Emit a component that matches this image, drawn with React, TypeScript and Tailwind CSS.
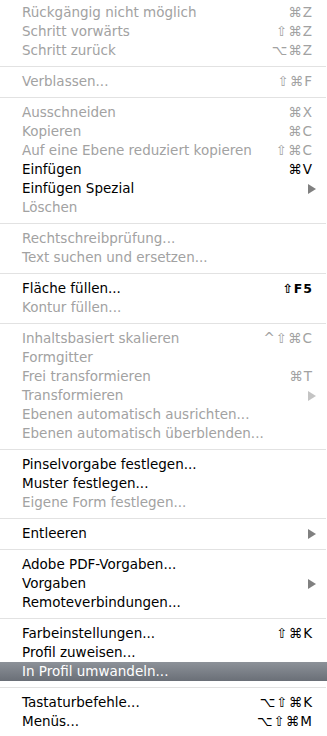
import React from "react";

type Item =
  | { sep: true }
  | {
      sep?: false;
      label: string;
      sc?: string;
      sub?: boolean;
      on?: boolean;
      hl?: boolean;
      boldSc?: boolean;
    };

const items: Item[] = [
  { label: "Rückgängig nicht möglich", sc: "⌘Z" },
  { label: "Schritt vorwärts", sc: "⇧⌘Z" },
  { label: "Schritt zurück", sc: "⌥⌘Z" },
  { sep: true },
  { label: "Verblassen...", sc: "⇧⌘F" },
  { sep: true },
  { label: "Ausschneiden", sc: "⌘X" },
  { label: "Kopieren", sc: "⌘C" },
  { label: "Auf eine Ebene reduziert kopieren", sc: "⇧⌘C" },
  { label: "Einfügen", sc: "⌘V", on: true },
  { label: "Einfügen Spezial", sub: true, on: true },
  { label: "Löschen" },
  { sep: true },
  { label: "Rechtschreibprüfung..." },
  { label: "Text suchen und ersetzen..." },
  { sep: true },
  { label: "Fläche füllen...", sc: "⇧F5", on: true, boldSc: true },
  { label: "Kontur füllen..." },
  { sep: true },
  { label: "Inhaltsbasiert skalieren", sc: "^⇧⌘C" },
  { label: "Formgitter" },
  { label: "Frei transformieren", sc: "⌘T" },
  { label: "Transformieren", sub: true },
  { label: "Ebenen automatisch ausrichten..." },
  { label: "Ebenen automatisch überblenden..." },
  { sep: true },
  { label: "Pinselvorgabe festlegen...", on: true },
  { label: "Muster festlegen...", on: true },
  { label: "Eigene Form festlegen..." },
  { sep: true },
  { label: "Entleeren", sub: true, on: true },
  { sep: true },
  { label: "Adobe PDF-Vorgaben...", on: true },
  { label: "Vorgaben", sub: true, on: true },
  { label: "Remoteverbindungen...", on: true },
  { sep: true },
  { label: "Farbeinstellungen...", sc: "⇧⌘K", on: true },
  { label: "Profil zuweisen...", on: true },
  { label: "In Profil umwandeln...", on: true, hl: true },
  { sep: true },
  { label: "Tastaturbefehle...", sc: "⌥⇧⌘K", on: true },
  { label: "Menüs...", sc: "⌥⇧⌘M", on: true },
];

function Tri({ color }: { color: string }) {
  return (
    <svg width="8" height="10" viewBox="0 0 8 10" className="block">
      <path d="M0 0 L8 5 L0 10 Z" fill={color} />
    </svg>
  );
}

export default function App() {
  return (
    <div
      className="w-[327px] h-[736px] bg-white pt-[3px] overflow-hidden"
      style={{ fontFamily: '"DejaVu Sans", sans-serif' }}
    >
      {items.map((it, i) => {
        if (it.sep) {
          return (
            <div key={i} className="h-[12px] pt-[6px] pr-[1px]">
              <div className="h-px w-full bg-[#e2e2e2]" />
            </div>
          );
        }
        const color = it.hl ? "text-white" : it.on ? "text-black" : "text-[#a2a2a2]";
        return (
          <div
            key={i}
            className={`h-[19px] flex items-center pl-[22px] pr-[14px] text-[13.5px] leading-[19px] ${color} ${
              it.hl ? "bg-gradient-to-b from-[#8d9299] to-[#6a6f77]" : ""
            }`}
          >
            <span className="flex-1 whitespace-nowrap">{it.label}</span>
            {it.sc && (
              <span
                className={`whitespace-nowrap tracking-[1px] ${it.boldSc ? "font-bold text-[12.5px]" : ""}`}
              >
                {it.sc}
              </span>
            )}
            {it.sub && (
              <span className="mr-[-3px]">
                <Tri color={it.on ? "#808080" : "#c4c4c4"} />
              </span>
            )}
          </div>
        );
      })}
    </div>
  );
}
